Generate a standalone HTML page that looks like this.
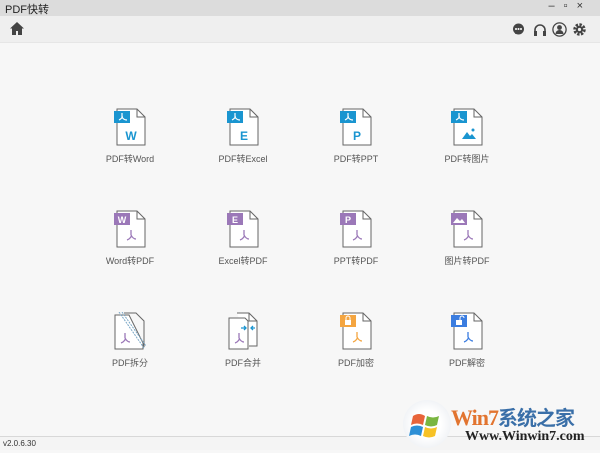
<!DOCTYPE html>
<html><head><meta charset="utf-8"><style>
*{margin:0;padding:0;box-sizing:border-box}
body{width:600px;height:450px;overflow:hidden;background:#f7f7f7;font-family:"Liberation Sans","Noto Sans CJK SC",sans-serif;position:relative;color:#555}
.title{position:absolute;left:0;top:0;width:600px;height:16px;background:#dcdcdc;font-size:11px;color:#222;padding:1px 0 0 5px}
.tb{position:absolute;left:0;top:16px;width:600px;height:27px;background:#efefef;border-bottom:1px solid #e6e6e6}
.it{position:absolute;width:100px;text-align:center;font-size:9px;color:#555}
.it svg{display:block;margin:0 auto 4px}
.status{position:absolute;left:0;top:436px;width:600px;height:14px;border-top:1px solid #d8d8d8;background:#f4f4f4;font-size:8px;color:#333;padding:2px 0 0 3px}
</style></head><body>
<div class="title">PDF快转<span style="position:absolute;right:8px;top:0;letter-spacing:9px;color:#333">–▫×</span></div>
<div class="tb">
<svg style="position:absolute;left:10px;top:6px" width="14" height="13" viewBox="0 0 14 13"><path d="M7 0L0 6.5h2V13h4V9h2v4h4V6.5h2z" fill="#444"/></svg>
<svg style="position:absolute;left:512px;top:7px" width="13" height="13" viewBox="0 0 13 13"><circle cx="6.5" cy="6" r="5.5" fill="#444"/><path d="M3 11l1-3 3 2z" fill="#444"/><circle cx="4" cy="6" r="1" fill="#fff"/><circle cx="6.5" cy="6" r="1" fill="#fff"/><circle cx="9" cy="6" r="1" fill="#fff"/></svg>
<svg style="position:absolute;left:533px;top:7px" width="14" height="13" viewBox="0 0 14 13"><path d="M2 10V7a5 5 0 0 1 10 0v3" fill="none" stroke="#444" stroke-width="1.6"/><rect x="1" y="8" width="3" height="5" fill="#444"/><rect x="10" y="8" width="3" height="5" fill="#444"/></svg>
<svg style="position:absolute;left:552px;top:6px" width="15" height="15" viewBox="0 0 15 15"><circle cx="7.5" cy="7.5" r="6.6" fill="none" stroke="#444" stroke-width="1.3"/><circle cx="7.5" cy="5.5" r="2.4" fill="#444"/><path d="M3.5 12a4 4 0 0 1 8 0z" fill="#444"/></svg>
<svg style="position:absolute;left:573px;top:7px" width="13" height="13" viewBox="0 0 13 13"><circle cx="6.5" cy="6.5" r="4.5" fill="none" stroke="#444" stroke-width="3.5" stroke-dasharray="2.2 1.3"/><circle cx="6.5" cy="6.5" r="3.6" fill="#444"/><circle cx="6.5" cy="6.5" r="1.6" fill="#efefef"/></svg>
</div>

<!-- row1 -->
<div class="it" style="left:80px;top:108px"><svg width="34" height="40" viewBox="-3 0 34 40"><path d="M1 1h20l8 8v28H1z" fill="#fff" stroke="#666"/><path d="M21 1v8h8" fill="none" stroke="#666"/><rect x="-2" y="3" width="16" height="12" fill="#1a95d0"/><path d="M6 5v4M3 12c2-1 4-3 3-4M6 9c1 2 3 3 5 3" stroke="#fff" fill="none" stroke-width="1.2"/><text x="15" y="32" font-size="12" font-weight="bold" fill="#1a95d0" text-anchor="middle" font-family="Liberation Sans">W</text></svg>PDF转Word</div>
<div class="it" style="left:193px;top:108px"><svg width="34" height="40" viewBox="-3 0 34 40"><path d="M1 1h20l8 8v28H1z" fill="#fff" stroke="#666"/><path d="M21 1v8h8" fill="none" stroke="#666"/><rect x="-2" y="3" width="16" height="12" fill="#1a95d0"/><path d="M6 5v4M3 12c2-1 4-3 3-4M6 9c1 2 3 3 5 3" stroke="#fff" fill="none" stroke-width="1.2"/><text x="15" y="32" font-size="12" font-weight="bold" fill="#1a95d0" text-anchor="middle" font-family="Liberation Sans">E</text></svg>PDF转Excel</div>
<div class="it" style="left:306px;top:108px"><svg width="34" height="40" viewBox="-3 0 34 40"><path d="M1 1h20l8 8v28H1z" fill="#fff" stroke="#666"/><path d="M21 1v8h8" fill="none" stroke="#666"/><rect x="-2" y="3" width="16" height="12" fill="#1a95d0"/><path d="M6 5v4M3 12c2-1 4-3 3-4M6 9c1 2 3 3 5 3" stroke="#fff" fill="none" stroke-width="1.2"/><text x="15" y="32" font-size="12" font-weight="bold" fill="#1a95d0" text-anchor="middle" font-family="Liberation Sans">P</text></svg>PDF转PPT</div>
<div class="it" style="left:417px;top:108px"><svg width="34" height="40" viewBox="-3 0 34 40"><path d="M1 1h20l8 8v28H1z" fill="#fff" stroke="#666"/><path d="M21 1v8h8" fill="none" stroke="#666"/><rect x="-2" y="3" width="16" height="12" fill="#1a95d0"/><path d="M6 5v4M3 12c2-1 4-3 3-4M6 9c1 2 3 3 5 3" stroke="#fff" fill="none" stroke-width="1.2"/><path d="M9 31l5-7 3 4 2-2 4 5z" fill="#1a95d0"/><circle cx="20" cy="22" r="1.5" fill="#1a95d0"/></svg>PDF转图片</div>

<!-- row2 -->
<div class="it" style="left:80px;top:210px"><svg width="34" height="40" viewBox="-3 0 34 40"><path d="M1 1h20l8 8v28H1z" fill="#fff" stroke="#666"/><path d="M21 1v8h8" fill="none" stroke="#666"/><rect x="-2" y="3" width="16" height="12" fill="#9b78b8"/><text x="6" y="13" font-size="9" font-weight="bold" fill="#fff" text-anchor="middle" font-family="Liberation Sans">W</text><path d="M15 20v5M11 30c3-1 5-4 4-5M15 25c1 2 3 4 5 4" stroke="#9b78b8" fill="none" stroke-width="1.3"/></svg>Word转PDF</div>
<div class="it" style="left:193px;top:210px"><svg width="34" height="40" viewBox="-3 0 34 40"><path d="M1 1h20l8 8v28H1z" fill="#fff" stroke="#666"/><path d="M21 1v8h8" fill="none" stroke="#666"/><rect x="-2" y="3" width="16" height="12" fill="#9b78b8"/><text x="6" y="13" font-size="9" font-weight="bold" fill="#fff" text-anchor="middle" font-family="Liberation Sans">E</text><path d="M15 20v5M11 30c3-1 5-4 4-5M15 25c1 2 3 4 5 4" stroke="#9b78b8" fill="none" stroke-width="1.3"/></svg>Excel转PDF</div>
<div class="it" style="left:306px;top:210px"><svg width="34" height="40" viewBox="-3 0 34 40"><path d="M1 1h20l8 8v28H1z" fill="#fff" stroke="#666"/><path d="M21 1v8h8" fill="none" stroke="#666"/><rect x="-2" y="3" width="16" height="12" fill="#9b78b8"/><text x="6" y="13" font-size="9" font-weight="bold" fill="#fff" text-anchor="middle" font-family="Liberation Sans">P</text><path d="M15 20v5M11 30c3-1 5-4 4-5M15 25c1 2 3 4 5 4" stroke="#9b78b8" fill="none" stroke-width="1.3"/></svg>PPT转PDF</div>
<div class="it" style="left:417px;top:210px"><svg width="34" height="40" viewBox="-3 0 34 40"><path d="M1 1h20l8 8v28H1z" fill="#fff" stroke="#666"/><path d="M21 1v8h8" fill="none" stroke="#666"/><rect x="-2" y="3" width="16" height="12" fill="#9b78b8"/><path d="M0 13l4-5 3 3 2-2 3 4z" fill="#fff"/><path d="M15 20v5M11 30c3-1 5-4 4-5M15 25c1 2 3 4 5 4" stroke="#9b78b8" fill="none" stroke-width="1.3"/></svg>图片转PDF</div>

<!-- row3 -->
<div class="it" style="left:80px;top:312px"><svg width="38" height="40" viewBox="-3 0 38 40"><path d="M1 3h14l14 28v6H1z" fill="#fff" stroke="#666"/><path d="M10 1h12l8 8v26" fill="none" stroke="#666"/><path d="M5 0l25 36M8 0l24 34" stroke="#7aa7c6" stroke-dasharray="2 1"/><path d="M11 21v5M7 31c3-1 5-4 4-5M11 26c1 2 3 4 5 4" stroke="#9b78b8" fill="none" stroke-width="1.3"/></svg>PDF拆分</div>
<div class="it" style="left:193px;top:312px"><svg width="36" height="40" viewBox="-3 0 36 40"><path d="M9 1h12l8 8v25h-8" fill="#fff" stroke="#666"/><path d="M21 1v8h8" fill="none" stroke="#666"/><path d="M1 6h16l3 3v28H1z" fill="#fff" stroke="#666"/><path d="M11 21v5M7 31c3-1 5-4 4-5M11 26c1 2 3 4 5 4" stroke="#9b78b8" fill="none" stroke-width="1.3"/><path d="M13 16h5M16 14l2 2-2 2M27 16h-4M25 14l-2 2 2 2" stroke="#1a95d0" fill="none" stroke-width="1.3"/></svg>PDF合并</div>
<div class="it" style="left:306px;top:312px"><svg width="34" height="40" viewBox="-3 0 34 40"><path d="M1 1h20l8 8v28H1z" fill="#fff" stroke="#666"/><path d="M21 1v8h8" fill="none" stroke="#666"/><rect x="-2" y="3" width="16" height="12" fill="#f4a540"/><rect x="3" y="8" width="6" height="5" fill="#fff"/><path d="M4 8V6a2 2 0 0 1 4 0v2" stroke="#fff" fill="none"/><path d="M15 20v5M11 30c3-1 5-4 4-5M15 25c1 2 3 4 5 4" stroke="#f4a540" fill="none" stroke-width="1.3"/></svg>PDF加密</div>
<div class="it" style="left:417px;top:312px"><svg width="34" height="40" viewBox="-3 0 34 40"><path d="M1 1h20l8 8v28H1z" fill="#fff" stroke="#666"/><path d="M21 1v8h8" fill="none" stroke="#666"/><rect x="-2" y="3" width="16" height="12" fill="#3b7de0"/><rect x="3" y="8" width="6" height="5" fill="#fff"/><path d="M7 8V6a2 2 0 0 1 4 0" stroke="#fff" fill="none"/><path d="M15 20v5M11 30c3-1 5-4 4-5M15 25c1 2 3 4 5 4" stroke="#3b7de0" fill="none" stroke-width="1.3"/></svg>PDF解密</div>

<div class="status">v2.0.6.30</div>
<!-- watermark -->
<div style="position:absolute;left:403px;top:400px;width:48px;height:48px;border-radius:50%;background:radial-gradient(circle,#fff 40%,#e4e8ee 100%)">
<svg width="48" height="48" viewBox="0 0 48 48"><path d="M10 16q6-4 12 0l-2 9q-6-3-12 0z" fill="#e8643a"/><path d="M24 16q6 3 12 0l-2 9q-6 3-12 0z" fill="#7ab641"/><path d="M8 27q6-3 12 0l-2 9q-6-3-12 0z" fill="#2d8fd6"/><path d="M22 27q6 3 12 0l-2 9q-6 3-12 0z" fill="#f7c226"/></svg></div>
<div style="position:absolute;left:451px;top:402px;font-family:'Liberation Serif','Noto Serif CJK SC',serif;font-weight:bold;font-size:22px;color:#e2742f;white-space:nowrap;letter-spacing:-1px">Win7<span style="color:#3a6fa8;font-family:'Noto Sans CJK SC',sans-serif;font-size:20px">系统之家</span></div>
<div style="position:absolute;left:465px;top:429px;font-family:'Liberation Serif',serif;font-weight:bold;font-size:14px;color:#222">Www.Winwin7.com</div>
</body></html>
